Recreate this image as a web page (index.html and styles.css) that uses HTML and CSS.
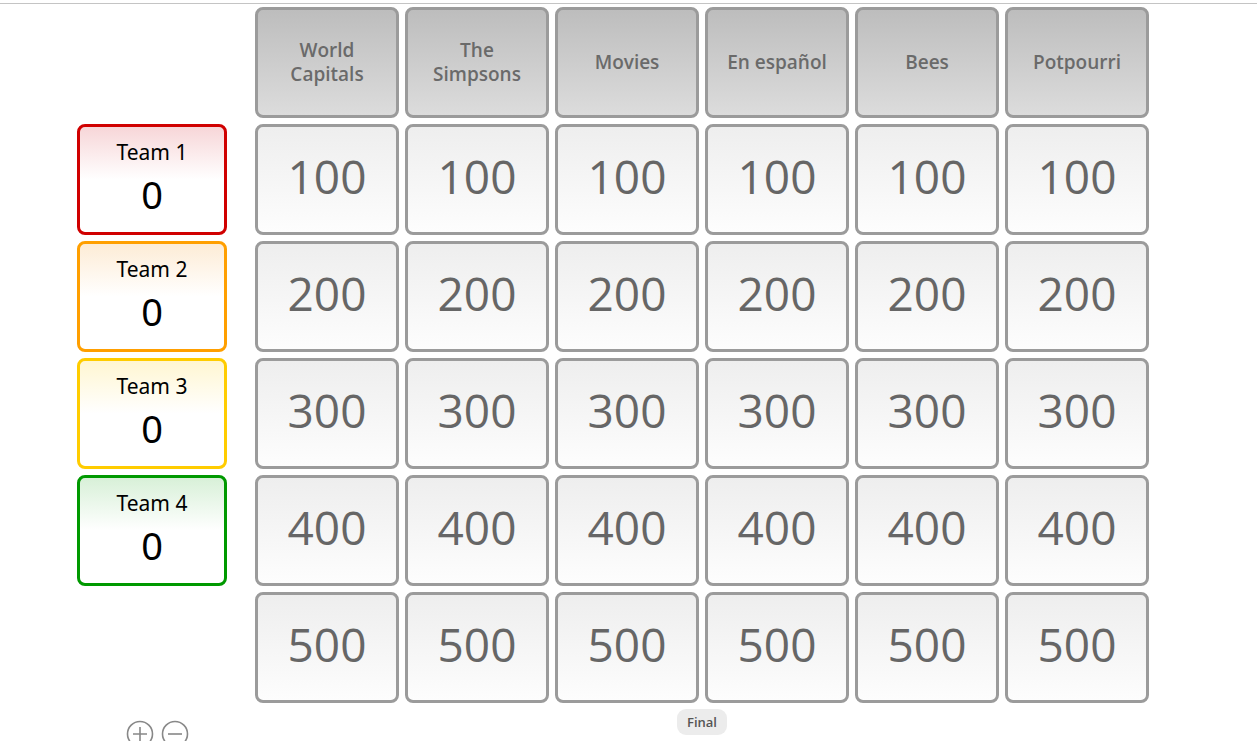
FILE: index.html
```html
<!DOCTYPE html>
<html>
<head>
<meta charset="utf-8">
<link rel="stylesheet" href="styles.css">
</head>
<body>
<div class="topbar"></div>
<div class="page">
  <div class="teams">
    <div class="team-spacer"></div>
    <div class="team t1"><div class="tname">Team 1</div><div class="tscore">0</div></div>
    <div class="team t2"><div class="tname">Team 2</div><div class="tscore">0</div></div>
    <div class="team t3"><div class="tname">Team 3</div><div class="tscore">0</div></div>
    <div class="team t4"><div class="tname">Team 4</div><div class="tscore">0</div></div>
    <div class="zoom">
      <svg width="28" height="28" viewBox="0 0 28 28"><circle cx="14" cy="14" r="12.5" fill="none" stroke="#888" stroke-width="1.6"/><path d="M14 7v14M7 14h14" stroke="#888" stroke-width="1.6"/></svg>
      <svg width="28" height="28" viewBox="0 0 28 28"><circle cx="14" cy="14" r="12.5" fill="none" stroke="#888" stroke-width="1.6"/><path d="M7 14h14" stroke="#888" stroke-width="1.6"/></svg>
    </div>
  </div>
  <div class="boardwrap">
    <div class="board">
      <div class="cell head">World<br>Capitals</div>
      <div class="cell head">The<br>Simpsons</div>
      <div class="cell head">Movies</div>
      <div class="cell head">En español</div>
      <div class="cell head">Bees</div>
      <div class="cell head">Potpourri</div>
      <div class="cell">100</div><div class="cell">100</div><div class="cell">100</div><div class="cell">100</div><div class="cell">100</div><div class="cell">100</div>
      <div class="cell">200</div><div class="cell">200</div><div class="cell">200</div><div class="cell">200</div><div class="cell">200</div><div class="cell">200</div>
      <div class="cell">300</div><div class="cell">300</div><div class="cell">300</div><div class="cell">300</div><div class="cell">300</div><div class="cell">300</div>
      <div class="cell">400</div><div class="cell">400</div><div class="cell">400</div><div class="cell">400</div><div class="cell">400</div><div class="cell">400</div>
      <div class="cell">500</div><div class="cell">500</div><div class="cell">500</div><div class="cell">500</div><div class="cell">500</div><div class="cell">500</div>
    </div>
    <div class="final-row"><span class="final">Final</span></div>
  </div>
</div>
</body>
</html>
```
FILE: styles.css
```css
html, body {
  margin: 0;
  padding: 0;
  background: #fff;
  overflow: hidden;
}
body {
  font-family: "Open Sans", "Noto Sans", sans-serif;
}
.topbar {
  height: 3px;
  border-bottom: 1px solid #c4c4c4;
}
.page {
  display: flex;
  padding: 3px 0 0 77px;
  gap: 28px;
}
.teams {
  width: 150px;
  display: flex;
  flex-direction: column;
  gap: 6px;
}
.team-spacer {
  height: 111px;
}
.team {
  box-sizing: border-box;
  height: 111px;
  border: 3px solid;
  border-radius: 8px;
  text-align: center;
  font-family: "Noto Sans", "Open Sans", sans-serif;
  color: #000;
}
.t1 { border-color: #d00000; background: linear-gradient(#f7d6d8, #fff 50%); }
.t2 { border-color: #ff9f00; background: linear-gradient(#fdecd6, #fff 50%); }
.t3 { border-color: #ffcc00; background: linear-gradient(#fff6d2, #fff 50%); }
.t4 { border-color: #009900; background: linear-gradient(#d8f0d8, #fff 50%); }
.tname {
  font-size: 21px;
  line-height: 26px;
  margin-top: 12px;
}
.tscore {
  font-size: 38px;
  line-height: 46px;
  margin-top: 6px;
}
.zoom {
  margin-top: 128px;
  display: flex;
  gap: 7px;
  padding-left: 49px;
}
.zoom svg { display: block; }
.board {
  display: grid;
  grid-template-columns: repeat(6, 144px);
  grid-auto-rows: 111px;
  column-gap: 6px;
  row-gap: 6px;
}
.cell {
  box-sizing: border-box;
  border: 3px solid #9b9b9b;
  border-radius: 8px;
  background: linear-gradient(#eeeeee, #fdfdfd);
  display: flex;
  align-items: center;
  justify-content: center;
  text-align: center;
  color: #666;
  font-family: "Open Sans", sans-serif;
  font-size: 46px;
  padding-bottom: 8px;
}
.cell.head {
  background: linear-gradient(#bdbdbd, #dcdcdc);
  font-size: 19px;
  line-height: 24px;
  font-weight: 600;
  color: #6a6a6a;
  padding-bottom: 2px;
}
.final-row {
  display: flex;
  justify-content: center;
  padding-top: 6px;
}
.final {
  background: #ececec;
  border-radius: 9px;
  padding: 4px 10px;
  font-size: 13px;
  font-weight: 600;
  color: #555;
  line-height: 18px;
}
```
